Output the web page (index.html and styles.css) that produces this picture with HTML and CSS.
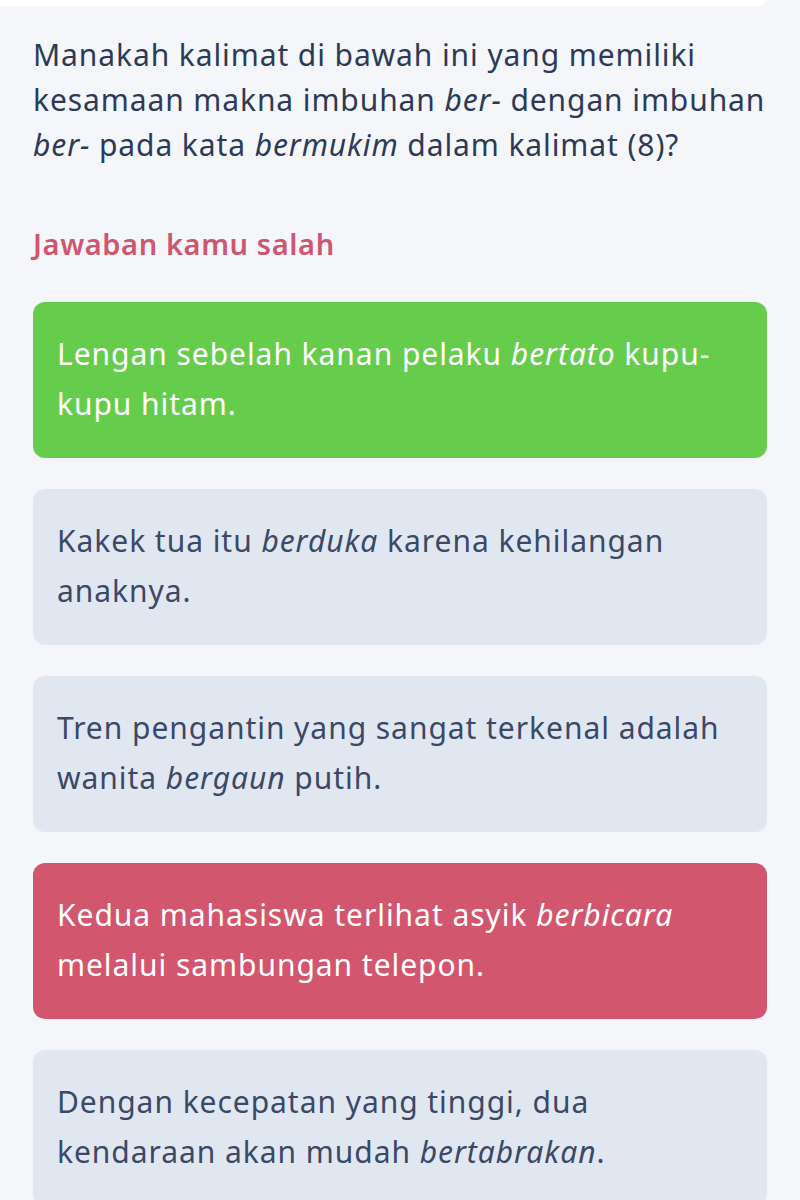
FILE: index.html
```html
<!DOCTYPE html>
<html lang="id">
<head>
    <meta charset="UTF-8">
    <meta name="viewport" content="width=device-width, initial-scale=1.0">
    <title>Soal Latihan</title>
    <link rel="stylesheet" href="styles.css">
</head>
<body>
    <div class="prev-card"></div>

    <div class="quiz">
        <p class="question">
            Manakah kalimat di bawah ini yang memiliki kesamaan makna imbuhan <em>ber-</em> dengan imbuhan <em>ber-</em> pada kata <em>bermukim</em> dalam kalimat (8)?
        </p>

        <h3 class="result wrong">Jawaban kamu salah</h3>

        <div class="options">
            <div class="option correct">Lengan sebelah kanan pelaku <em>bertato</em> kupu-kupu hitam.</div>
            <div class="option">Kakek tua itu <em>berduka</em> karena kehilangan anaknya.</div>
            <div class="option">Tren pengantin yang sangat terkenal adalah wanita <em>bergaun</em> putih.</div>
            <div class="option chosen">Kedua mahasiswa terlihat asyik <em>berbicara</em> melalui sambungan telepon.</div>
            <div class="option">Dengan kecepatan yang tinggi, dua kendaraan akan mudah <em>bertabrakan</em>.</div>
        </div>
    </div>
</body>
</html>
```

FILE: styles.css
```css
* {
    margin: 0;
    padding: 0;
    box-sizing: border-box;
}

body {
    background-color: #f4f6fa;
    font-family: 'Noto Sans', 'Open Sans', sans-serif;
    color: #2c3a58;
}

/* bottom edge of the card above */
.prev-card {
    height: 6px;
    margin-right: 35px;
    background-color: #fff;
    border-radius: 0 0 12px 0;
}

.quiz {
    padding: 26px 33px 0;
}

.question {
    font-size: 30px;
    line-height: 45px;
    letter-spacing: 0.9px;
}

.result {
    margin-top: 57px;
    font-size: 29px;
    line-height: 40px;
    font-weight: 600;
    letter-spacing: 0.6px;
}

.result.wrong {
    color: #cf5670;
}

.options {
    display: flex;
    flex-direction: column;
    gap: 31px;
    margin-top: 38px;
}

.option {
    min-height: 156px;
    padding: 27px 30px 29px 24px;
    border-radius: 12px;
    background-color: #e1e7f1;
    color: #3b4866;
    font-size: 30px;
    line-height: 50px;
    letter-spacing: 0.95px;
}

.option.correct {
    background-color: #66cd4c;
    color: #fff;
}

.option.chosen {
    background-color: #d1566e;
    color: #fff;
}
```
